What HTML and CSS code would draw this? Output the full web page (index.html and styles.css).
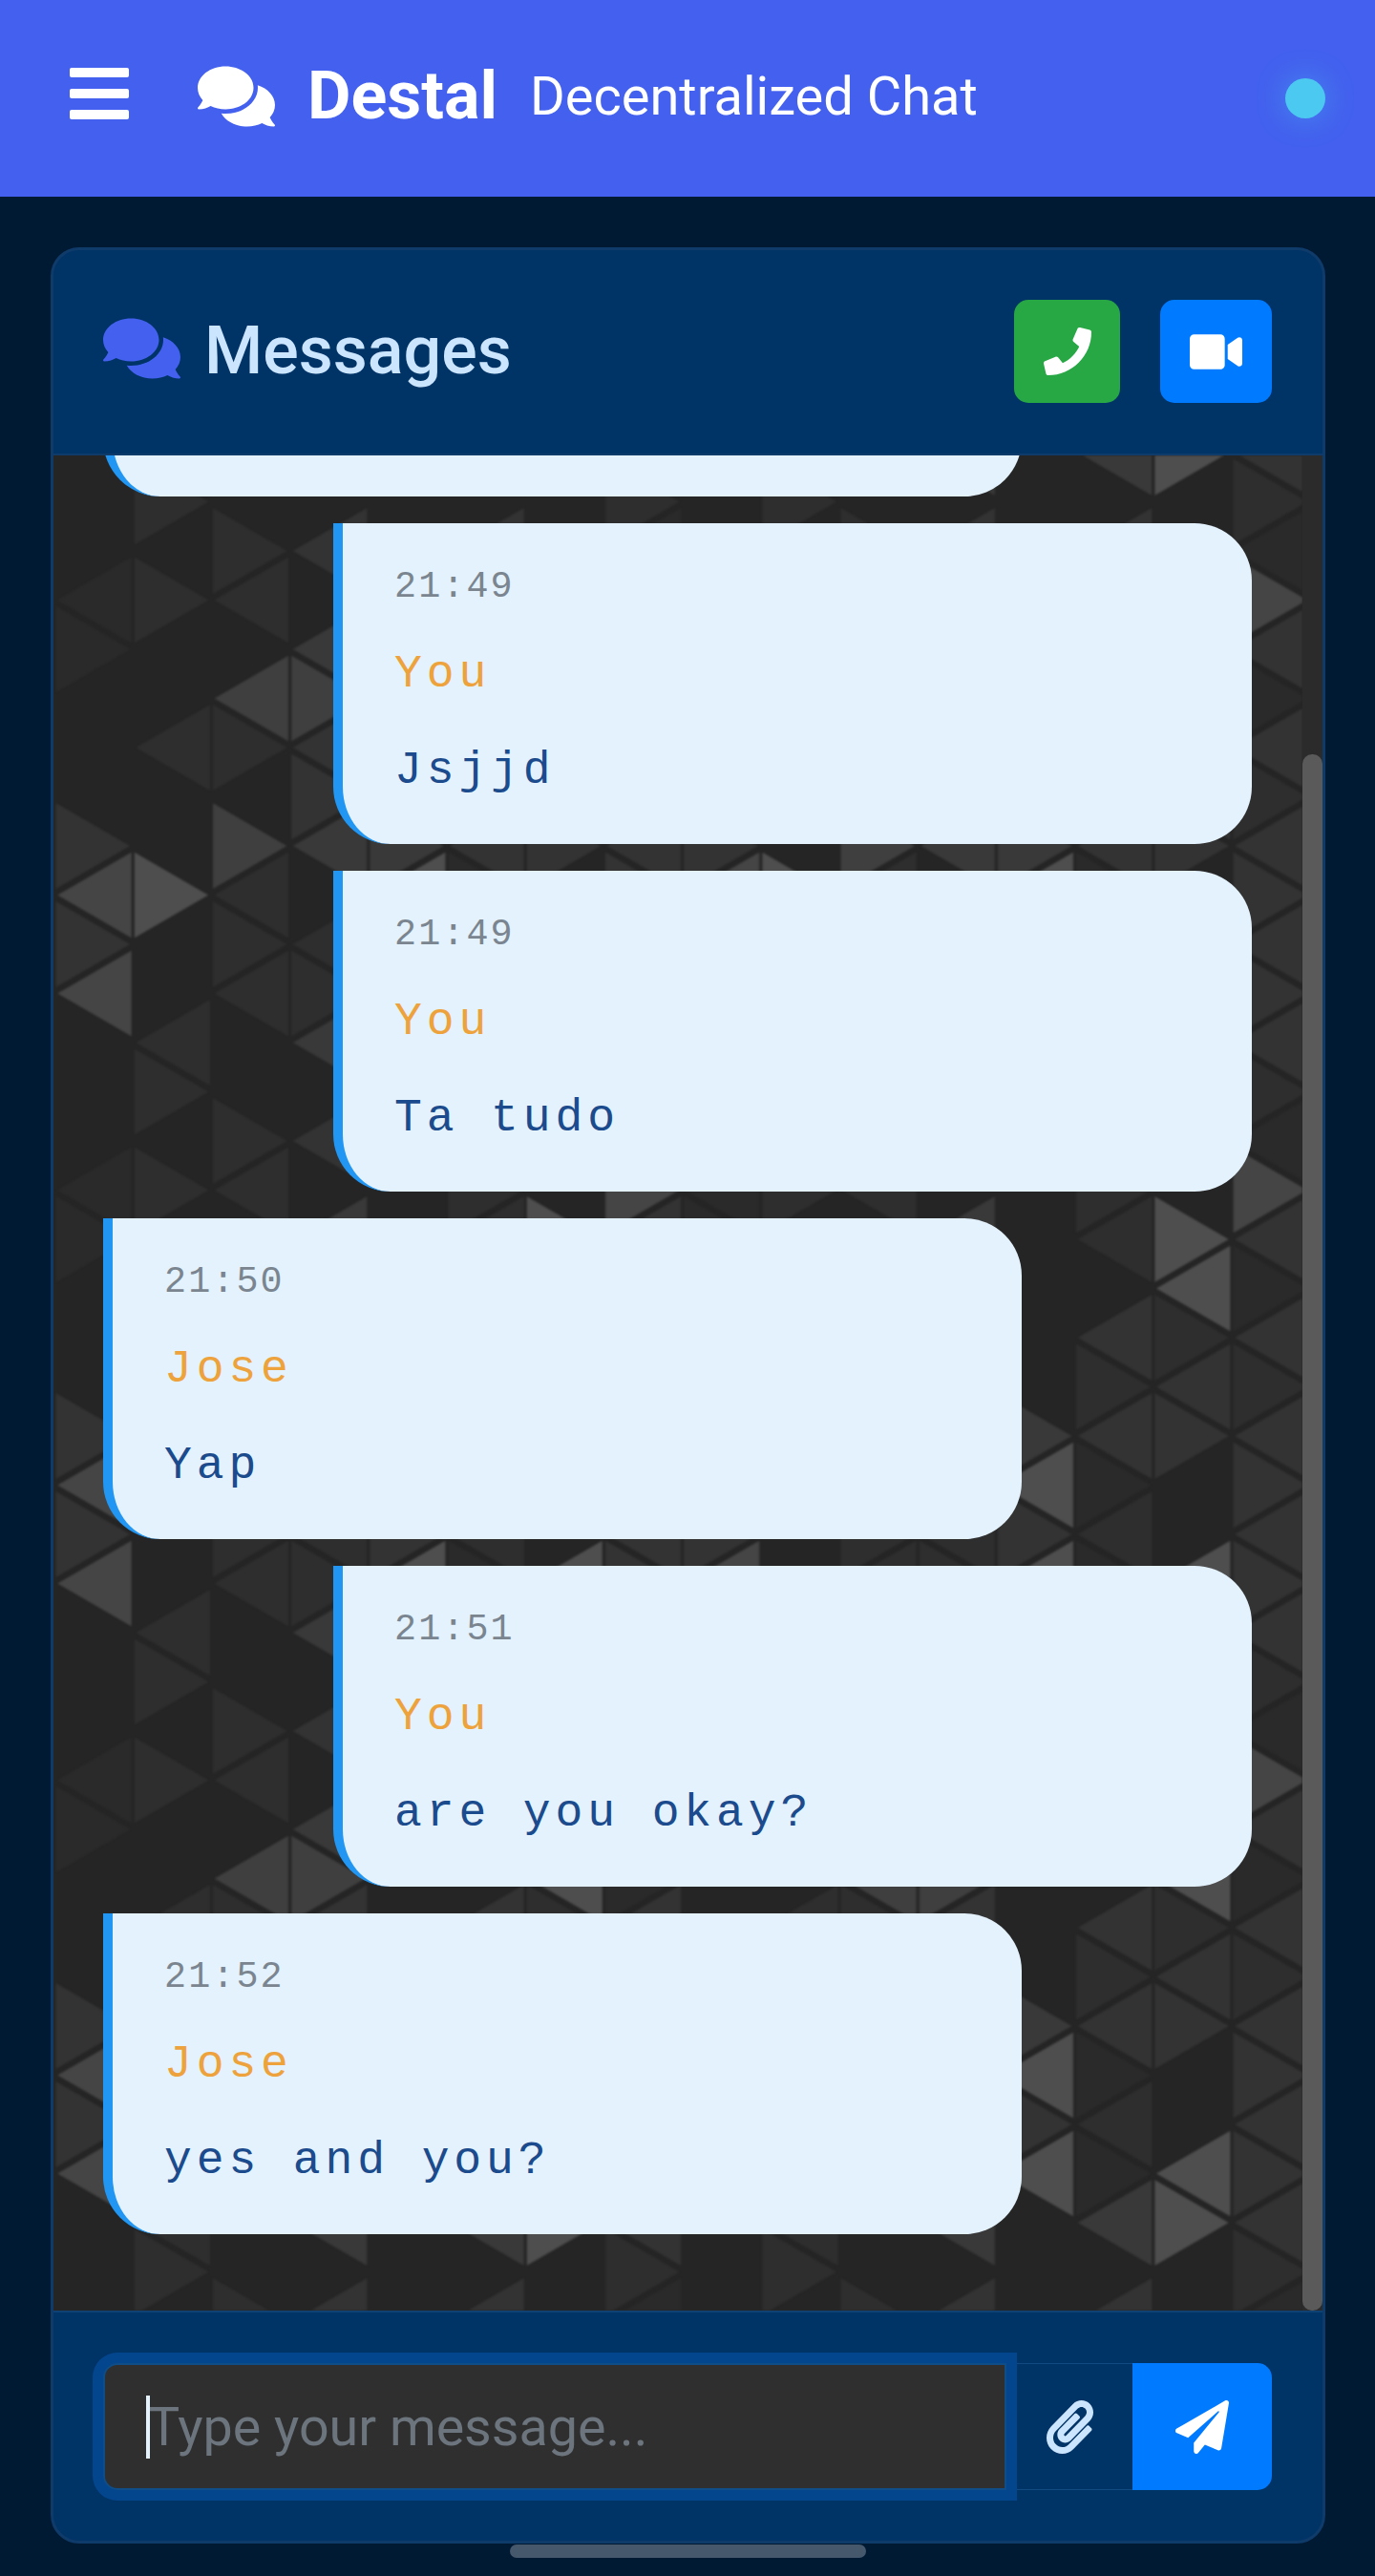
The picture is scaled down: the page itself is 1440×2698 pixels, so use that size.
FILE: index.html
```html
<!DOCTYPE html>
<html lang="en">
<head>
<meta charset="utf-8">
<title>Destal - Decentralized Chat</title>
<link rel="stylesheet" href="styles.css">
</head>
<body>
<header class="topbar">
  <svg class="menu-icon" viewBox="0 0 62 54" aria-hidden="true"><rect width="62" height="10" rx="2"/><rect y="22" width="62" height="10" rx="2"/><rect y="44" width="62" height="10" rx="2"/></svg>
  <svg class="comments-icon comments-light" viewBox="0 0 576 512" aria-hidden="true"><use href="#i-comments"/></svg>
  <h1 class="brand">Destal</h1>
  <span class="tagline">Decentralized Chat</span>
  <span class="status-dot"></span>
</header>
<main class="page">
  <section class="panel">
    <div class="panel-head">
      <svg class="comments-icon comments-blue" viewBox="0 0 576 512" aria-hidden="true"><use href="#i-comments"/></svg>
      <h2 class="panel-title">Messages</h2>
      <button class="call-btn call-voice" type="button" aria-label="Voice call"><svg class="phone-icon" viewBox="0 0 512 512"><path d="M493.4 24.6l-104-24c-11.3-2.6-22.9 3.3-27.5 13.9l-48 112c-4.2 9.8-1.4 21.3 6.9 28l60.6 49.6c-36 76.7-98.9 140.5-177.2 177.2l-49.6-60.6c-6.8-8.3-18.2-11.1-28-6.9l-112 48C3.9 366.5-2 378.1.6 389.4l24 104C27.1 504.2 36.7 512 48 512c256.1 0 464-207.5 464-464 0-11.2-7.7-20.9-18.6-23.4z"/></svg></button>
      <button class="call-btn call-video" type="button" aria-label="Video call"><svg class="video-icon" viewBox="0 0 576 512"><path d="M336.2 64H47.8C21.4 64 0 85.4 0 111.8v288.4C0 426.6 21.4 448 47.8 448h288.4c26.4 0 47.8-21.4 47.8-47.8V111.8c0-26.4-21.4-47.8-47.8-47.8zm189.4 37.7L416 177.3v157.4l109.6 75.5c21.2 14.6 50.4-.3 50.4-25.8V127.5c0-25.4-29.1-40.4-50.4-25.8z"/></svg></button>
    </div>

    <div class="messages">
      <svg class="wallpaper" aria-hidden="true">
        <defs>
          <polygon id="r" points="0.02,0.13 0.02,1.87 0.96,1"/>
          <polygon id="l" points="0.04,1 0.98,0.13 0.98,1.87"/>
          <pattern id="tile" patternUnits="userSpaceOnUse" width="8" height="12" patternTransform="translate(1 -3) scale(82.2 51.5)">
            <use href="#l" x="0" y="8" class="s6"/><use href="#l" x="0" y="10" class="s6"/><use href="#r" x="0" y="7" class="s3"/><use href="#r" x="0" y="9" class="s3"/><use href="#l" x="0" y="2" class="s1"/><use href="#r" x="0" y="3" class="s1"/>
            <use href="#r" x="1" y="8" class="s7"/><use href="#l" x="1" y="5" class="s2"/><use href="#l" x="1" y="11" class="s2"/><use href="#l" x="1" y="-1" class="s2"/><use href="#r" x="1" y="0" class="s2"/><use href="#r" x="1" y="2" class="s2"/>
            <use href="#l" x="2" y="4" class="s5"/><use href="#r" x="2" y="7" class="s5"/><use href="#r" x="2" y="5" class="s2"/><use href="#r" x="2" y="9" class="s2"/><use href="#l" x="2" y="10" class="s2"/><use href="#l" x="2" y="8" class="s2"/><use href="#r" x="2" y="1" class="s2"/><use href="#l" x="2" y="2" class="s2"/>
            <use href="#r" x="3" y="4" class="s5"/><use href="#r" x="3" y="6" class="s3"/><use href="#r" x="3" y="10" class="s2"/><use href="#l" x="3" y="3" class="s4"/><use href="#l" x="3" y="1" class="s3"/><use href="#l" x="3" y="5" class="s3"/><use href="#l" x="3" y="7" class="s4"/><use href="#l" x="3" y="9" class="s2"/><use href="#l" x="3" y="11" class="s4"/><use href="#l" x="3" y="-1" class="s4"/>
            <use href="#l" x="4" y="8" class="s7"/><use href="#l" x="4" y="10" class="s7"/><use href="#r" x="4" y="7" class="s4"/><use href="#r" x="4" y="9" class="s3"/>
            <use href="#l" x="5" y="3" class="s2"/><use href="#l" x="5" y="5" class="s3"/><use href="#l" x="5" y="7" class="s3"/><use href="#l" x="5" y="9" class="s2"/><use href="#l" x="5" y="11" class="s4"/><use href="#l" x="5" y="-1" class="s4"/><use href="#l" x="5" y="1" class="s3"/><use href="#r" x="5" y="6" class="s2"/><use href="#r" x="5" y="8" class="s1"/><use href="#r" x="5" y="10" class="s1"/><use href="#r" x="5" y="2" class="s2"/>
            <use href="#r" x="6" y="3" class="s7"/><use href="#l" x="6" y="4" class="s7"/><use href="#r" x="6" y="5" class="s2"/><use href="#l" x="6" y="6" class="s3"/><use href="#r" x="6" y="7" class="s3"/><use href="#l" x="6" y="10" class="s7"/><use href="#r" x="6" y="11" class="s7"/><use href="#r" x="6" y="-1" class="s7"/>
            <use href="#r" x="7" y="2" class="s6"/><use href="#l" x="7" y="3" class="s3"/><use href="#r" x="7" y="4" class="s1"/><use href="#l" x="7" y="5" class="s3"/><use href="#r" x="7" y="6" class="s2"/><use href="#l" x="7" y="7" class="s3"/><use href="#r" x="7" y="8" class="s3"/><use href="#l" x="7" y="9" class="s3"/><use href="#r" x="7" y="10" class="s3"/><use href="#l" x="7" y="11" class="s3"/><use href="#l" x="7" y="-1" class="s3"/><use href="#r" x="7" y="0" class="s2"/><use href="#l" x="7" y="1" class="s1"/>
          </pattern>
        </defs>
        <rect class="wallpaper-fill" width="100%" height="100%"/>
      </svg>

      <article class="bubble bubble-in"></article>
      <article class="bubble bubble-out">
        <time class="bubble-time">21:49</time>
        <div class="bubble-name">You</div>
        <p class="bubble-text">Jsjjd</p>
      </article>
      <article class="bubble bubble-out">
        <time class="bubble-time">21:49</time>
        <div class="bubble-name">You</div>
        <p class="bubble-text">Ta tudo</p>
      </article>
      <article class="bubble bubble-in">
        <time class="bubble-time">21:50</time>
        <div class="bubble-name">Jose</div>
        <p class="bubble-text">Yap</p>
      </article>
      <article class="bubble bubble-out">
        <time class="bubble-time">21:51</time>
        <div class="bubble-name">You</div>
        <p class="bubble-text">are you okay?</p>
      </article>
      <article class="bubble bubble-in">
        <time class="bubble-time">21:52</time>
        <div class="bubble-name">Jose</div>
        <p class="bubble-text">yes and you?</p>
      </article>

      <div class="scroll-track"><div class="scroll-thumb"></div></div>
    </div>

    <form class="composer">
      <div class="input-wrap">
        <input class="message-input" type="text" placeholder="Type your message...">
        <span class="caret"></span>
      </div>
      <button class="attach-btn" type="button" aria-label="Attach file"><svg class="clip-icon" viewBox="0 0 448 512"><path d="M43.246 466.142c-58.43-60.289-57.341-157.511 1.386-217.581L254.392 34c44.316-45.332 116.351-45.336 160.671 0 43.89 44.894 43.943 117.329 0 162.276L232.214 383.128c-29.855 30.537-78.633 30.111-107.982-.998-28.275-29.97-27.368-77.473 1.452-106.953l143.743-146.835c6.182-6.314 16.312-6.422 22.626-.241l22.861 22.379c6.315 6.182 6.422 16.312.241 22.626L171.427 319.927c-4.932 5.045-5.236 13.428-.648 18.292 4.372 4.634 11.245 4.711 15.688.165l182.849-186.851c19.613-20.062 19.613-52.725-.011-72.798-19.189-19.627-49.957-19.637-69.154 0L90.39 293.295c-34.763 35.56-35.299 93.12-1.191 128.313 34.01 35.093 88.985 35.137 123.058.286l172.06-175.999c6.177-6.319 16.307-6.433 22.626-.256l22.877 22.364c6.319 6.177 6.434 16.307.256 22.626l-172.06 175.998c-59.576 60.938-155.943 60.216-214.77-.485z"/></svg></button>
      <button class="send-btn" type="button" aria-label="Send"><svg class="plane-icon" viewBox="0 0 512 512"><path d="M476 3.2L12.5 270.6c-18.1 10.4-15.8 35.6 2.2 43.2L121 358.4l287.3-253.2c5.5-4.9 13.3 2.6 8.6 8.3L176 407v80.5c0 23.6 28.5 32.9 42.5 15.8L282 426l124.6 52.2c14.2 6 30.4-2.9 33-18.2l72-432C515 7.8 493.3-6.8 476 3.2z"/></svg></button>
    </form>
  </section>
  <div class="page-scroll"></div>
</main>
<svg class="icon-defs" aria-hidden="true"><defs><path id="i-comments" d="M416 192c0-88.4-93.1-160-208-160S0 103.6 0 192c0 34.3 14.1 65.9 38 92-13.4 30.2-35.5 54.2-35.8 54.5-2.2 2.3-2.8 5.7-1.5 8.7S4.8 352 8 352c36.6 0 66.9-12.3 88.7-25 32.2 15.7 70.3 25 111.3 25 114.9 0 208-71.6 208-160zm122 220c23.9-26 38-57.7 38-92 0-66.9-53.5-124.2-129.3-148.1.9 6.6 1.3 13.3 1.3 20.1 0 105.9-107.7 192-240 192-10.8 0-21.3-.8-31.7-1.9C207.8 439.6 281.8 480 368 480c41 0 79.1-9.2 111.3-25 21.8 12.7 52.1 25 88.7 25 3.2 0 6.1-1.9 7.3-4.8 1.3-2.9.7-6.3-1.5-8.7-.3-.3-22.4-24.2-35.8-54.5z"/></defs></svg>
</body>
</html>
```

FILE: styles.css
```css
* { box-sizing: border-box; }

html, body {
  margin: 0;
  height: 2698px;
  overflow: hidden;
}

body {
  background: #001a33;
  font-family: Roboto, "Liberation Sans", sans-serif;
  color: #fff;
}

.icon-defs { width: 0; height: 0; display: block; }

/* Top bar */
.topbar {
  height: 206px;
  padding: 0 52px 0 73px;
  background: #4361ee;
  display: flex;
  align-items: center;
}

.menu-icon {
  width: 62px;
  height: 54px;
  fill: #fff;
  margin: 0 72px 10px 0;
  flex: none;
}

.comments-icon {
  width: 81px;
  height: 72px;
  flex: none;
}

.comments-light { fill: #fff; margin: 0 34px 5px 0; }
.comments-blue { fill: #4361ee; margin: 0 25px 6px 0; }

.brand {
  margin: 0 34px 6px 0;
  font-size: 70px;
  line-height: 1;
  font-weight: 700;
}

.tagline {
  margin-bottom: 4px;
  font-size: 56px;
  line-height: 1;
  font-weight: 400;
}

.status-dot {
  margin-left: auto;
  width: 42px;
  height: 42px;
  border-radius: 50%;
  background: #4cc9f0;
  box-shadow: 0 0 30px rgba(76, 201, 240, .4);
}

/* Panel */
.page { padding: 53px 52px 0 53px; }

.panel {
  height: 2405px;
  border: 3px solid #0f3b6b;
  border-radius: 30px;
  background: #003366;
  overflow: hidden;
  display: flex;
  flex-direction: column;
}

.panel-head {
  height: 215px;
  flex: none;
  padding: 0 53px 1px 52px;
  border-bottom: 2px solid #0f3b6b;
  display: flex;
  align-items: center;
}

.panel-title {
  margin: 0 auto 3px 0;
  font-size: 70px;
  line-height: 1;
  font-weight: 500;
  color: #cce5ff;
}

.call-btn {
  height: 108px;
  border: 0;
  border-radius: 15px;
  padding: 0;
  display: flex;
  align-items: center;
  justify-content: center;
}

.call-voice { width: 111px; background: #28a745; margin-right: 42px; }
.call-video { width: 117px; background: #007bff; }

.phone-icon { width: 50px; height: 50px; fill: #fff; }
.video-icon { width: 55px; height: 49px; fill: #fff; }

/* Messages */
.messages {
  position: relative;
  isolation: isolate;
  height: 1943px;
  flex: none;
  padding: 0 74px 80px 52px;
  background: #252525;
  overflow: hidden;
  display: flex;
  flex-direction: column;
  justify-content: flex-end;
  gap: 28px;
}

.wallpaper {
  position: absolute;
  top: 0;
  left: 0;
  width: 1308px;
  height: 100%;
  z-index: -1;
  filter: blur(1px);
}

.wallpaper-fill { fill: url(#tile); }

.s1 { fill: #2a2a2a; }
.s2 { fill: #2e2e2e; }
.s3 { fill: #333; }
.s4 { fill: #393939; }
.s5 { fill: #3f3f3f; }
.s6 { fill: #454545; }
.s7 { fill: #4e4e4e; }

.bubble {
  flex: none;
  width: 962px;
  height: 336px;
  padding: 39px 40px 0 54px;
  background: #e3f2fd;
  border-left: 10px solid #2196f3;
  border-radius: 0 60px 60px 60px;
  font-family: "Liberation Mono", monospace;
}

.bubble-in { align-self: flex-start; }
.bubble-out { align-self: flex-end; }

.bubble-time {
  display: block;
  font-size: 38.4px;
  line-height: 57.6px;
  letter-spacing: 2.1px;
  color: #7a8590;
}

.bubble-name {
  margin-top: 25px;
  font-size: 48px;
  line-height: 72px;
  letter-spacing: 4.9px;
  color: #eea23c;
}

.bubble-text {
  margin: 29px 0 0;
  font-size: 48px;
  line-height: 72px;
  letter-spacing: 4.9px;
  color: #1b4b8c;
}

.scroll-track {
  position: absolute;
  top: 0;
  right: 0;
  bottom: 0;
  width: 21px;
  background: #2b2b2b;
}

.scroll-thumb {
  position: absolute;
  left: 0;
  right: 0;
  top: 313px;
  bottom: 0;
  border-radius: 10px;
  background: #5a5a5a;
}

/* Composer */
.composer {
  flex: 1;
  border-top: 2px solid #0f4274;
  padding: 53px 53px 0 52px;
  display: flex;
  align-items: flex-start;
}

.input-wrap {
  position: relative;
  z-index: 1;
  width: 946px;
  height: 133px;
  flex: none;
}

.message-input {
  display: block;
  width: 100%;
  height: 100%;
  padding: 0 20px 0 45px;
  border: 2px solid #0e4d87;
  border-radius: 15px 0 0 15px;
  outline: 0;
  background: #2f2f2f;
  box-shadow: 0 0 0 11px #04468e;
  font-family: Roboto, "Liberation Sans", sans-serif;
  font-size: 55.6px;
  color: #fff;
}

.message-input::placeholder { color: #6c757d; opacity: 1; }

.caret {
  position: absolute;
  left: 45px;
  top: 34px;
  width: 4px;
  height: 66px;
  background: #e3f2fd;
}

.attach-btn {
  width: 132px;
  height: 133px;
  flex: none;
  padding: 0;
  border: 0;
  border-top: 1px solid #114a80;
  border-bottom: 1px solid #114a80;
  background: #003366;
  display: flex;
  align-items: center;
  justify-content: center;
}

.clip-icon { width: 49px; height: 56px; fill: #cce5ff; }

.send-btn {
  width: 146px;
  height: 133px;
  flex: none;
  padding: 0;
  border: 0;
  border-radius: 0 15px 15px 0;
  background: #007bff;
  display: flex;
  align-items: center;
  justify-content: center;
}

.plane-icon { width: 56px; height: 56px; fill: #fff; }

.page-scroll {
  width: 373px;
  height: 14px;
  margin: 1px auto 0;
  border-radius: 7px;
  background: #46586c;
}
```
